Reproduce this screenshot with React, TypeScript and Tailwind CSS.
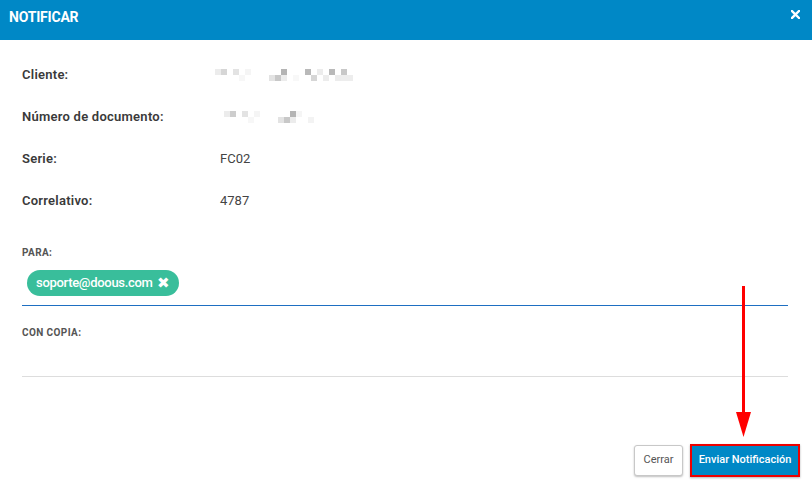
import React from "react";

type Cell = [number, number, string];

// Pixelated (censored) values: [x, y, colour] cells of 6x6
const clienteCells: Cell[] = [
  [1, 0, "#ececec"], [7, 0, "#d6d6d6"], [19, 0, "#e3e3e3"], [31, 0, "#f5f5f5"],
  [67, 0, "#b4b4b4"], [91, 0, "#b9b9b9"], [103, 0, "#ececec"], [115, 0, "#b9b9b9"], [127, 0, "#c8c8c8"],
  [25, 6, "#f7f7f7"], [55, 6, "#e3e3e3"], [61, 6, "#c8c8c8"], [67, 6, "#ececec"], [79, 6, "#f8f8f8"],
  [97, 6, "#d6d6d6"], [109, 6, "#ececec"], [121, 6, "#ececec"], [127, 6, "#ededed"], [133, 6, "#ededed"],
];

const documentoCells: Cell[] = [
  [6, 0, "#ececec"], [12, 0, "#cdcdcd"], [24, 0, "#e3e3e3"], [36, 0, "#f5f5f5"],
  [72, 0, "#b4b4b4"], [78, 0, "#f5f5f5"],
  [30, 6, "#f7f7f7"], [60, 6, "#e3e3e3"], [66, 6, "#c8c8c8"], [72, 6, "#ececec"], [90, 6, "#f3f3f3"],
];

function Pixelated({ cells, width }: { cells: Cell[]; width: number }) {
  return (
    <svg width={width} height={12} viewBox={`0 0 ${width} 12`} className="block">
      {cells.map(([x, y, c], i) => (
        <rect key={i} x={x} y={y} width={6} height={6} fill={c} />
      ))}
    </svg>
  );
}

function InfoRow({ label, children }: { label: string; children: React.ReactNode }) {
  return (
    <div className="flex items-center h-[42px]">
      <div className="w-[198px] text-[13px] font-semibold tracking-[0.25px] text-[#3a3a3a]">{label}</div>
      <div className="text-[13px] text-[#444]">{children}</div>
    </div>
  );
}

export default function App() {
  return (
    <div
      className="relative w-[812px] h-[488px] bg-white overflow-hidden"
      style={{ fontFamily: "Roboto, 'Liberation Sans', sans-serif" }}
    >
      {/* Title bar */}
      <div className="h-[40px] bg-[#0088c6] flex items-center justify-between pl-[9px] pr-[12px]">
        <span className="text-white text-[14px] font-bold tracking-[-0.2px] -mt-[6px]">NOTIFICAR</span>
        <svg width="9" height="9" viewBox="0 0 9 9" className="-mt-[12px]">
          <path d="M1 1 L8 8 M8 1 L1 8" stroke="#fff" strokeWidth="2.4" strokeLinecap="square" />
        </svg>
      </div>

      {/* Body */}
      <div className="pl-[22px] pr-[24px] pt-[14px]">
        <InfoRow label="Cliente:">
          <div className="-ml-[6px]">
            <Pixelated cells={clienteCells} width={140} />
          </div>
        </InfoRow>
        <InfoRow label="Número de documento:">
          <div className="-ml-[2px]">
            <Pixelated cells={documentoCells} width={100} />
          </div>
        </InfoRow>
        <InfoRow label="Serie:">FC02</InfoRow>
        <InfoRow label="Correlativo:">4787</InfoRow>

        {/* Recipients */}
        <div className="mt-[25px] text-[10px] font-bold text-[#555] tracking-[0.4px] leading-[12px]">PARA:</div>
        <div className="mt-[11px] pl-[5px] pb-[9px] border-b border-[#1e6fc2]">
          <span className="inline-flex items-center h-[26px] pl-[9px] pr-[10px] gap-[4px] rounded-full bg-[#39be9b] text-white text-[13px] font-medium tracking-[-0.3px]">
            soporte@doous.com
            <span className="text-[15px] leading-none">✖</span>
          </span>
        </div>

        <div className="mt-[21px] text-[10px] font-bold text-[#555] tracking-[0.4px] leading-[12px]">CON COPIA:</div>
        <div className="h-[38px] border-b border-[#dddddd]"></div>
      </div>

      {/* Footer actions */}
      <div className="absolute right-[12px] top-[444px] flex items-center gap-[7px]">
        <button className="h-[31px] w-[49px] bg-white border border-[#c8c8c8] rounded-[3px] shadow-[0_1px_2px_rgba(0,0,0,0.25)] text-[11px] text-[#555]">
          Cerrar
        </button>
        <button className="h-[33px] w-[110px] border-2 border-[#ee0000] bg-[#0088c6] text-white text-[11px] font-medium shadow-[0_1px_2px_rgba(0,0,0,0.3)]">
          Enviar Notificación
        </button>
      </div>

      {/* Red pointer arrow */}
      <svg className="absolute left-[734px] top-[284px]" width="20" height="155" viewBox="0 0 20 155">
        <line x1="9.5" y1="2" x2="9.5" y2="132" stroke="#ff0000" strokeWidth="3" />
        <polygon points="2,128 17,128 9.5,153" fill="#ff0000" />
      </svg>
    </div>
  );
}
